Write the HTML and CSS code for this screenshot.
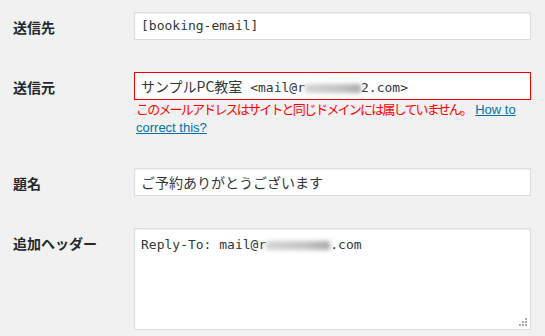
FILE: index.html
```html
<!DOCTYPE html>
<html lang="ja">
  <head>
    <meta charset="UTF-8" />
    <meta name="viewport" content="width=device-width, initial-scale=1.0" />
    <title>メール設定</title>
    <link rel="stylesheet" href="styles.css">
  </head>
  <body>
    <div class="form">
      <div class="row">
        <div class="label">送信先</div>
        <div class="cell">
          <div class="field">[booking-email]</div>
        </div>
      </div>
      <div class="row">
        <div class="label">送信元</div>
        <div class="cell">
          <div class="field field-error"><span class="ja">サンプルPC教室</span> &lt;mail@r<span class="blur blur-short"></span>2.com&gt;</div>
          <div class="error">このメールアドレスはサイトと同じドメインには属していません。<a href="#" class="help">How to correct this?</a></div>
        </div>
      </div>
      <div class="row">
        <div class="label">題名</div>
        <div class="cell">
          <div class="field ja">ご予約ありがとうございます</div>
        </div>
      </div>
      <div class="row">
        <div class="label">追加ヘッダー</div>
        <div class="cell">
          <div class="field textarea"><svg class="grip" width="9" height="9" viewBox="0 0 9 9"><rect x="6" y="0" width="2" height="2" fill="#aaa" /><rect x="3" y="3" width="2" height="2" fill="#aaa" /><rect x="6" y="3" width="2" height="2" fill="#aaa" /><rect x="0" y="6" width="2" height="2" fill="#aaa" /><rect x="3" y="6" width="2" height="2" fill="#aaa" /><rect x="6" y="6" width="2" height="2" fill="#aaa" /></svg>Reply-To: mail@r<span class="blur"></span>.com</div>
        </div>
      </div>
    </div>
  </body>
</html>
```

FILE: styles.css
```css
* {
  box-sizing: border-box;
}

body {
  margin: 0;
  background-color: #f1f1f1;
  color: #23282d;
  font-family: "Noto Sans CJK JP", "Noto Sans", sans-serif;
}

.form {
  padding: 12px 0 0 13px;
}

.row {
  display: grid;
  grid-template-columns: 121px 397px;
}

.row + .row {
  margin-top: 32px;
}

.label {
  font-size: 14px;
  font-weight: 700;
  line-height: 20px;
  padding-top: 5px;
}

.field {
  position: relative;
  height: 28px;
  padding: 0 6px;
  background: #fff;
  border: 1px solid #ddd;
  box-shadow: inset 0 1px 2px rgba(0, 0, 0, 0.07);
  font-family: "DejaVu Sans Mono", "Noto Sans CJK JP", monospace;
  font-size: 13px;
  line-height: 26px;
  color: #32373c;
  white-space: pre;
}

.ja {
  font-family: "Noto Sans CJK JP", sans-serif;
  font-size: 14px;
}

.field-error {
  border-color: #e00;
  box-shadow: none;
}

/* masked part of the address */
.blur {
  display: inline-block;
  width: 64px;
  height: 9px;
  vertical-align: -1px;
  background: linear-gradient(90deg, #d4d4d4, #c4c4c4 60%, #aaa);
  filter: blur(2px);
}

.blur-short {
  width: 56px;
}

.error {
  color: #f00;
  font-size: 13px;
  letter-spacing: -1.8px;
  line-height: 17px;
  padding-left: 2px;
}

.help {
  color: #0073aa;
  font-family: "Liberation Sans", sans-serif;
  letter-spacing: 0;
  margin-left: 4px;
}

.textarea {
  height: 102px;
  padding-top: 6px;
  line-height: 20px;
}

.grip {
  position: absolute;
  right: 2px;
  bottom: 2px;
}
```
